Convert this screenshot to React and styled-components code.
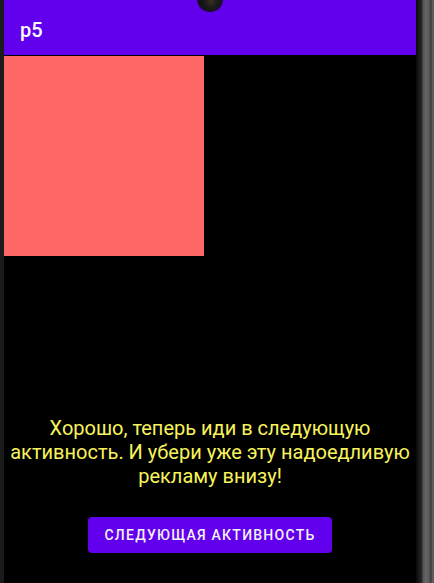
import React from 'react'
import styled, { createGlobalStyle } from 'styled-components'

const GlobalStyle = createGlobalStyle`
  html, body {
    margin: 0;
    padding: 0;
    background: #000;
  }
  body {
    font-family: Roboto, "Noto Sans", sans-serif;
  }
`

const Device = styled.div`
  display: flex;
  height: 583px;
  position: relative;
  overflow: hidden;
`

const LeftBezel = styled.div`
  width: 4px;
  background: #1b1b1b;
`

const RightBezel = styled.div`
  width: 18px;
  background: linear-gradient(
    to right,
    #0a0a0a 0px,
    #1e1e1e 4px,
    #2a2a2a 6px,
    #555 7px,
    #666 10px,
    #5a5a5a 13px,
    #3a3a3a 15px,
    #6a6a6a 17px,
    #4a4a4a 18px
  );
`

const Screen = styled.div`
  flex: 1;
  display: flex;
  flex-direction: column;
  background: #000;
`

const AppBar = styled.header`
  height: 55px;
  background: #6200ee;
  display: flex;
  align-items: center;
  padding: 4px 16px 0;
  box-sizing: border-box;
  color: #fff;
  font-size: 20px;
  font-weight: 500;
`

const Square = styled.div`
  width: 200px;
  height: 200px;
  margin-top: 1px;
  background: #ff6666;
`

const Bottom = styled.div`
  margin-top: auto;
  display: flex;
  flex-direction: column;
  align-items: center;
  padding-bottom: 30px;
`

const Message = styled.p`
  margin: 0 0 29px;
  color: #f8f35c;
  font-size: 20px;
  line-height: 24px;
  text-align: center;
  white-space: nowrap;
`

const Button = styled.button`
  height: 36px;
  width: 244px;
  border: none;
  border-radius: 4px;
  background: #6200ee;
  color: #f2f2f2;
  font-family: Roboto, sans-serif;
  font-size: 14px;
  font-weight: 500;
  letter-spacing: 1.25px;
  text-transform: uppercase;
`

const Camera = styled.div`
  position: absolute;
  left: 198px;
  top: -13px;
  width: 24px;
  height: 24px;
  border-radius: 50%;
  background: radial-gradient(circle at 55% 60%, #3a3020 0, #1c1c1c 30%, #0d0d0d 70%);
  box-shadow: 0 0 0 1px #111;
`

export default function App() {
  return (
    <>
      <GlobalStyle />
      <Device>
        <LeftBezel />
        <Screen>
          <AppBar>p5</AppBar>
          <Square />
          <Bottom>
            <Message>
              Хорошо, теперь иди в следующую
              <br />
              активность. И убери уже эту надоедливую
              <br />
              рекламу внизу!
            </Message>
            <Button>Следующая активность</Button>
          </Bottom>
        </Screen>
        <RightBezel />
        <Camera />
      </Device>
    </>
  )
}
